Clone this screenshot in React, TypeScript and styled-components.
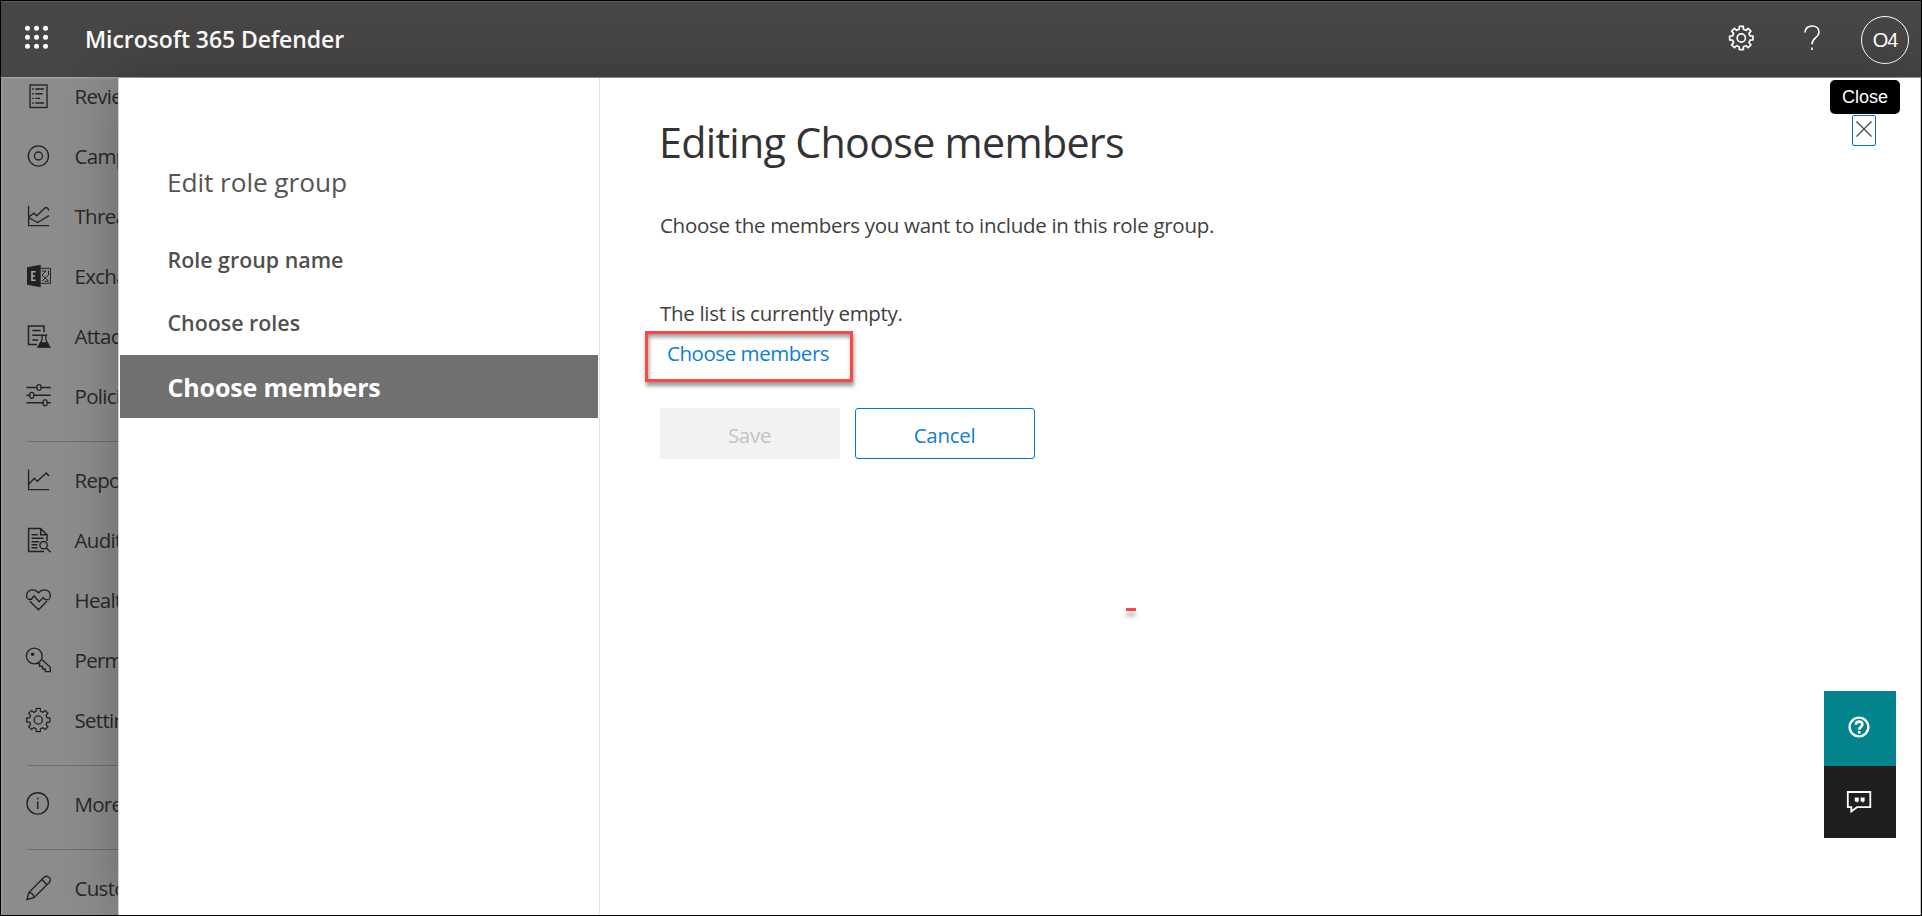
import React from "react";
import styled, { createGlobalStyle } from "styled-components";

const GlobalStyle = createGlobalStyle`
  *, *::before, *::after { box-sizing: border-box; }
  body {
    margin: 0;
    background: #fff;
    font-family: "Open Sans", "Noto Sans", sans-serif;
  }
  button { font-family: inherit; margin: 0; padding: 0; }
  h1, h2, p { margin: 0; font-weight: 400; }
`;

const Frame = styled.div`
  display: flex;
  flex-direction: column;
  width: 100%;
  height: 916px;
  border: 1px solid #000;
  overflow: hidden;
  background: #8c8c8c;
`;

const Header = styled.header`
  display: flex;
  align-items: center;
  flex: none;
  height: 77px;
  padding: 0 12px 0 23px;
  background: #484644;
  border-top: 1px solid #5d5b59;
  border-bottom: 1px solid #a09f9e;
  color: #fff;
`;

const Waffle = styled.svg`
  display: block;
  width: 26px;
  height: 26px;
  margin-top: -5px;
`;

const Brand = styled.div`
  margin: -1px 0 0 35px;
  font-size: 23px;
  line-height: 32px;
  font-weight: 600;
  letter-spacing: -0.08px;
`;

const HeaderTools = styled.div`
  display: flex;
  align-items: center;
  margin-left: auto;
`;

const ToolIcon = styled.svg<{ $gap: number }>`
  display: block;
  width: 26px;
  height: 26px;
  margin: -3px ${(p) => p.$gap}px 0 0;
  fill: none;
  stroke: #fff;
  overflow: visible;
`;

const Avatar = styled.div`
  display: flex;
  align-items: center;
  justify-content: center;
  width: 48px;
  height: 48px;
  padding-top: 2px;
  border: 1px solid #fff;
  border-radius: 50%;
  font: 20px "Liberation Sans", sans-serif;
  letter-spacing: -1px;
`;

const Body = styled.div`
  display: flex;
  flex: 1;
  min-height: 0;
`;

const Sidebar = styled.nav`
  flex: none;
  width: 117px;
  overflow: hidden;
  border-left: 2px solid #979797;
  border-top: 1px solid #979797;
  color: #282828;
`;

const SideList = styled.div`
  width: 240px;
  margin-top: -13px;
`;

const SideRow = styled.div`
  display: flex;
  align-items: center;
  height: 60px;
  padding-left: 23px;
  font-size: 20.5px;
  letter-spacing: -0.7px;
`;

const SideIcon = styled.svg`
  display: block;
  flex: none;
  width: 26px;
  height: 26px;
  margin-right: 22.5px;
  fill: none;
  stroke: #222;
  stroke-width: 1.35;
  overflow: visible;
`;

const SideRule = styled.div`
  height: 1px;
  margin: 15px 0 8px 24px;
  background: #6f6f6f;
`;

const Panel = styled.main`
  position: relative;
  display: flex;
  flex: 1;
  min-width: 0;
  border-left: 1px solid #d0d0d0;
  border-right: 1px solid #c8c8c8;
  background: #fff;
  box-shadow: 0 0 50px rgba(0, 0, 0, 0.26);
`;

const Steps = styled.aside`
  flex: none;
  width: 481px;
  padding: 84px 1px 0;
  border-right: 1px solid #e4e4e4;
`;

const StepsTitle = styled.h2`
  height: 67px;
  padding-left: 47px;
  font-size: 26.3px;
  line-height: 40px;
  letter-spacing: -0.1px;
  color: #555;
`;

const Step = styled.div<{ $active?: boolean }>`
  height: 63px;
  padding-left: 47.5px;
  line-height: ${(p) => (p.$active ? 64 : 62)}px;
  font-size: ${(p) => (p.$active ? 25 : 21.4)}px;
  font-weight: ${(p) => (p.$active ? 700 : 600)};
  letter-spacing: ${(p) => (p.$active ? -0.15 : 0)}px;
  color: ${(p) => (p.$active ? "#fff" : "#505050")};
  background: ${(p) => (p.$active ? "#707070" : "transparent")};
`;

const Content = styled.section`
  flex: 1;
  padding: 36px 0 0 60px;
`;

const Title = styled.h1`
  margin-left: -1px;
  font-size: 41.2px;
  line-height: 56px;
  letter-spacing: -0.7px;
  color: #333;
`;

const Text = styled.p<{ $top: number }>`
  margin-top: ${(p) => p.$top}px;
  font-size: 20.5px;
  line-height: 30px;
  letter-spacing: -0.3px;
  color: #404040;
`;

const Highlight = styled.div`
  width: 208px;
  height: 51px;
  margin: 3px 0 0 -15px;
  padding: 4px 0 0 19px;
  border: 3px solid #ff4545;
  box-shadow: 1px 4px 4px rgba(0, 0, 0, 0.4), inset 1px 3px 4px rgba(0, 0, 0, 0.4);
`;

const LinkButton = styled.button`
  display: block;
  border: 0;
  background: none;
  font-size: 20.5px;
  line-height: 30px;
  letter-spacing: -0.45px;
  color: #0f7dd4;
`;

const Actions = styled.div`
  display: flex;
  gap: 15px;
  margin-top: 26px;
`;

const Button = styled.button<{ $muted?: boolean }>`
  width: 180px;
  height: 51px;
  padding: 2px 1px 0 0;
  border: 1px solid ${(p) => (p.$muted ? "#f2f2f2" : "#0078d4")};
  border-radius: 3px;
  background: ${(p) => (p.$muted ? "#f2f2f2" : "#fff")};
  color: ${(p) => (p.$muted ? "#c2c2c2" : "#0f7dd4")};
  font-size: 20.5px;
  line-height: 30px;
  letter-spacing: -0.3px;
`;

const CloseArea = styled.div`
  position: absolute;
  top: 2px;
  right: 20px;
  display: flex;
  flex-direction: column;
  align-items: flex-start;
`;

const Tooltip = styled.div`
  width: 70px;
  height: 34px;
  border-radius: 5px;
  background: #000;
  color: #fff;
  text-align: center;
  font: 18px/34px "Liberation Sans", sans-serif;
`;

const CloseButton = styled.button`
  display: flex;
  align-items: center;
  justify-content: center;
  width: 24px;
  height: 31px;
  margin: 1px 0 0 22px;
  padding-bottom: 4px;
  border: 1px solid #0078d4;
  border-radius: 2px;
  background: #fff;
`;

const CloseGlyph = styled.svg`
  flex: none;
  width: 16px;
  height: 16px;
  stroke: #444;
  stroke-width: 1.2;
`;

const HelpDock = styled.div`
  position: absolute;
  top: 613px;
  right: 24px;
  width: 72px;
`;

const DockButton = styled.div<{ $color: string; $height: number }>`
  display: flex;
  align-items: center;
  justify-content: center;
  height: ${(p) => p.$height}px;
  padding-bottom: 3px;
  background: ${(p) => p.$color};
`;

const DockIcon = styled.svg`
  width: 26px;
  height: 26px;
  margin-left: -2px;
  fill: none;
  stroke: #fff;
  stroke-width: 2.4;
`;

const DashMark = styled.div`
  position: absolute;
  top: 530px;
  left: 1007px;
  width: 10px;
  height: 3px;
  background: #ff4545;
  box-shadow: 0 5px 4px rgba(0, 0, 0, 0.35);
`;

/* Outline of an eight-toothed gear centred on (cx, cy). */
function gearPath(cx: number, cy: number, outer: number, inner: number) {
  const offsets: [number, number][] = [
    [-0.24, inner],
    [-0.17, outer],
    [0.17, outer],
    [0.24, inner],
  ];
  const points: string[] = [];
  for (let tooth = 0; tooth < 8; tooth++) {
    const mid = (tooth * Math.PI) / 4;
    for (const [o, r] of offsets) {
      const x = cx + r * Math.sin(mid + o);
      const y = cy - r * Math.cos(mid + o);
      points.push(`${x.toFixed(2)} ${y.toFixed(2)}`);
    }
  }
  return `M${points.join("L")}Z`;
}

const Gear = ({ weight = 1.3 }: { weight?: number }) => (
  <g strokeWidth={weight} strokeLinejoin="round">
    <path d={gearPath(12.3, 13, 11.8, 9)} />
    <circle cx="12.3" cy="13" r="4.1" />
  </g>
);

const icons = {
  review: (
    <>
      <rect x="4" y="2" width="17" height="22.5" />
      <path d="M9.3 6H18M9.3 10.7h7.4M9.3 15.4H14M9.3 20H18M6.2 6h1.6M6.2 10.7h1.6M6.2 15.4h1.6M6.2 20h1.6" />
    </>
  ),
  campaigns: (
    <>
      <circle cx="12.4" cy="13" r="10.1" />
      <circle cx="12.4" cy="13" r="4" />
    </>
  ),
  threat: (
    <path d="M2.6 2.7V22.6H23M2.6 14L8 10.2l2.8 2.6 8.6-8.3 2 .3 1.6 2.6M2.6 14l2 1.8 7 3.7L23 12.7" />
  ),
  exchange: (
    <>
      <path d="M1 4.2L14.7 1.8v22.4L1 21.8z" fill="#222" stroke="none" />
      <path d="M9.7 8.8H6v8.4h3.7M6 13h3.2" stroke="#a8a8a8" strokeWidth="1.6" />
      <path d="M14.7 5.3h9.8v15h-9.8M16 8h4l-4 4M22.5 7.5v4.5L16 18M22.5 18.2h-4M16 12l6.5 6" strokeWidth="1" />
    </>
  ),
  attack: (
    <>
      <path d="M18 9V3H2.5v18.6H11M6.3 7.4h8.4M6.3 12.2h8.4M6.3 17H12" strokeWidth="1.5" />
      <path d="M14.5 12.2h6.8M16 12.2v4.5l-3.7 7.2h11.2l-3.7-7.2v-4.5" />
      <path d="M14.7 19.8h6.4l2.4 4.2H12.3z" fill="#222" />
    </>
  ),
  policies: (
    <>
      <path d="M.4 4.5H11M15 4.5h9.8M.4 12.3h3.4M7.8 12.3h17M.4 19.8h16.7M21.1 19.8h3.7" strokeWidth="1.5" />
      <rect x="11" y="1.6" width="4" height="5.8" rx="1.8" />
      <rect x="3.8" y="9.4" width="4" height="5.8" rx="1.8" />
      <rect x="17.1" y="16.9" width="4" height="5.8" rx="1.8" />
    </>
  ),
  reports: <path d="M2.6 2.6V22.6H23M2.6 17.2l5.8-6 2.9 3.1 9-8.3L23 9" />,
  audit: (
    <>
      <path d="M21 14V7.7L14.7 1.6H2.6v22.8H18M14.7 1.6v6.1H21" strokeWidth="1.5" />
      <path d="M5.5 7.7h6.3M5.5 11.3h12M5.5 14.7h7.7M5.5 17.7h6M5.5 20.7h6" strokeWidth="1.4" />
      <circle cx="17.6" cy="18.2" r="3.7" />
      <path d="M20.3 21L24.6 25.3" />
    </>
  ),
  health: (
    <>
      <path d="M1.4 11.6C-.4 8 1 2.8 6.7 2.8c3 0 4.6 1.5 5.8 3 1.2-1.5 2.8-3 5.8-3 5.8 0 7.1 5.4 5.2 9M3.6 14l8.9 8.7L21 14" />
      <path d="M1.6 12.2h3.7l2.8-3.4 5 6 4-4 2 1.8h4.3" />
    </>
  ),
  key: (
    <>
      <path d="M15.5 12.3l8.8 8v4.3h-5v-2.6h-2.8v-2.7h-2.8v-2.6H11.3" />
      <circle cx="8.3" cy="9" r="7.9" />
      <circle cx="6.6" cy="7.3" r="1.1" fill="#222" />
    </>
  ),
  settings: <Gear />,
  more: (
    <>
      <circle cx="11.7" cy="12.4" r="10.7" />
      <path d="M11.7 10.5v7.5M11.7 6.8v1.8" strokeWidth="1.5" />
    </>
  ),
  pencil: (
    <path d="M1 24.5l1.8-7L18 2.3c3.5-3 8.3 1.5 5.2 5.2L8 22.7zM2.8 17.5c2.8.2 5 2.400 5.200 5.200M15.800 4.500l5.200 5.200" />
  ),
};

type Entry = { icon: keyof typeof icons; label: string };

const groups: Entry[][] = [
  [
    { icon: "review", label: "Review" },
    { icon: "campaigns", label: "Campaigns" },
    { icon: "threat", label: "Threat tracker" },
    { icon: "exchange", label: "Exchange" },
    { icon: "attack", label: "Attack" },
    { icon: "policies", label: "Policies" },
  ],
  [
    { icon: "reports", label: "Reports" },
    { icon: "audit", label: "Audit" },
    { icon: "health", label: "Health" },
    { icon: "key", label: "Permissions" },
    { icon: "settings", label: "Settings" },
  ],
  [{ icon: "more", label: "More" }],
  [{ icon: "pencil", label: "Customize" }],
];

const waffleDots = [4.3, 13.3, 22.3];

export default function App() {
  return (
    <>
      <GlobalStyle />
      <Frame>
        <Header>
          <Waffle viewBox="0 0 26 26" fill="#fff">
            {waffleDots.map((y) =>
              waffleDots.map((x) => <circle key={`${x}-${y}`} cx={x - 0.8} cy={y} r="2.5" />)
            )}
          </Waffle>
          <Brand>Microsoft 365 Defender</Brand>
          <HeaderTools>
            <ToolIcon $gap={44} viewBox="0 0 26 26">
              <Gear weight={1.7} />
            </ToolIcon>
            <ToolIcon $gap={36} viewBox="0 0 26 26">
              <path
                d="M6 7.500C6 3.500 9 1 13 1s7 2.500 7 6.200c0 5.500-7 5.600-7 12M13 22.600v2.400"
                strokeWidth="1.700"
              />
            </ToolIcon>
            <Avatar>O4</Avatar>
          </HeaderTools>
        </Header>
        <Body>
          <Sidebar>
            <SideList>
              {groups.map((group, index) => (
                <React.Fragment key={group[0].label}>
                  {index > 0 && <SideRule />}
                  {group.map(({ icon, label }) => (
                    <SideRow key={label}>
                      <SideIcon viewBox="0 0 26 26">{icons[icon]}</SideIcon>
                      {label}
                    </SideRow>
                  ))}
                </React.Fragment>
              ))}
            </SideList>
          </Sidebar>
          <Panel>
            <Steps>
              <StepsTitle>Edit role group</StepsTitle>
              <Step>Role group name</Step>
              <Step>Choose roles</Step>
              <Step $active>Choose members</Step>
            </Steps>
            <Content>
              <Title>Editing Choose members</Title>
              <Text $top={40}>Choose the members you want to include in this role group.</Text>
              <Text $top={58}>The list is currently empty.</Text>
              <Highlight>
                <LinkButton>Choose members</LinkButton>
              </Highlight>
              <Actions>
                <Button $muted>Save</Button>
                <Button>Cancel</Button>
              </Actions>
            </Content>
            <CloseArea>
              <Tooltip>Close</Tooltip>
              <CloseButton aria-label="Close">
                <CloseGlyph viewBox="0 0 16 16">
                  <path d="M.5.5l15 15M15.5.5l-15 15" />
                </CloseGlyph>
              </CloseButton>
            </CloseArea>
            <DashMark />
            <HelpDock>
              <DockButton $color="#03838b" $height={75}>
                <DockIcon viewBox="0 0 26 26">
                  <circle cx="13" cy="13" r="9.4" />
                  <path d="M9.8 10.8c.2-4.300 6.600-4 6.600-.2 0 2.400-3.200 2.200-3.200 5.200M13.200 17v2.400" strokeWidth="2.600" />
                </DockIcon>
              </DockButton>
              <DockButton $color="#201f1e" $height={72}>
                <DockIcon viewBox="0 0 26 26">
                  <path d="M1.800 4h22.500v15.200h-13.300L5.300 23.500v-4.300H1.800z" strokeWidth="1.800" />
                  <path d="M8.800 9.500h4v3.500l-2 2v-1.500h-2zM14.600 9.500h4v3.500l-2 2v-1.500h-2z" fill="#fff" stroke="none" />
                </DockIcon>
              </DockButton>
            </HelpDock>
          </Panel>
        </Body>
      </Frame>
    </>
  );
}
